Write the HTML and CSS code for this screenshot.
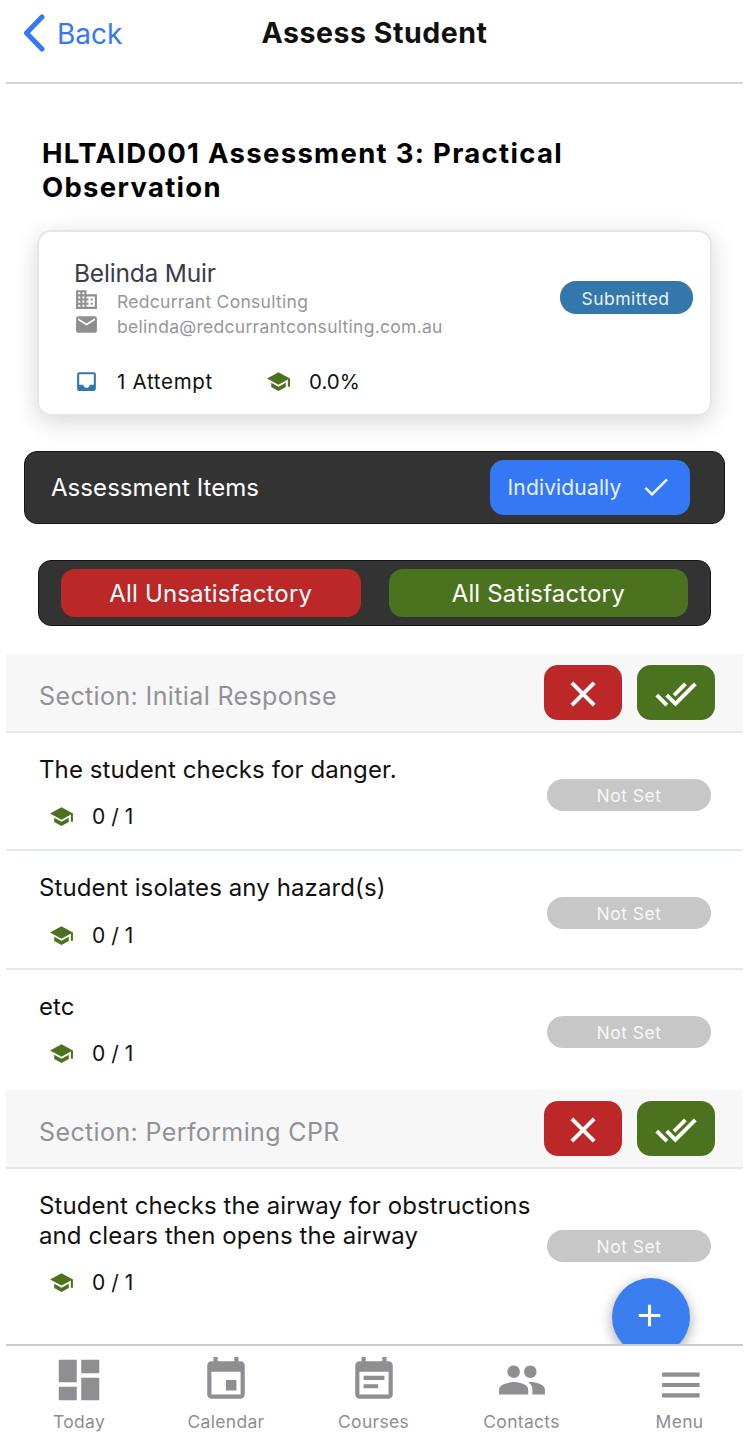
FILE: index.html
```html
<!DOCTYPE html>
<html lang="en">
<head>
  <meta charset="UTF-8" />
  <title>Assess Student</title>
  <link rel="stylesheet" href="styles.css">
</head>
<body>

  <!-- Icon set -->
  <svg class="sprite" viewBox="0 0 24 24">
    <symbol id="school" viewBox="0 0 24 24"><path d="M5 13.18v4L12 21l7-3.82v-4L12 17l-7-3.82zM12 3L1 9l11 6 9-4.91V17h2V9L12 3z"/></symbol>
    <symbol id="close" viewBox="0 0 24 24"><path d="M19 6.41L17.59 5 12 10.59 6.41 5 5 6.41 10.59 12 5 17.59 6.41 19 12 13.41 17.59 19 19 17.59 13.41 12z"/></symbol>
    <symbol id="done-all" viewBox="0 0 24 24"><path d="M18 7l-1.41-1.41-6.34 6.34 1.41 1.41L18 7zm4.24-1.41L11.66 16.17 7.48 12l-1.41 1.41L11.66 19l12-12-1.42-1.41zM.41 13.41L6 19l1.41-1.41L1.83 12 .41 13.41z"/></symbol>
  </svg>

  <header class="header">
    <a class="back" href="#">
      <svg class="chevron" viewBox="0 0 22 38"><path d="M19 3L3.5 19 19 35"/></svg>
      <span>Back</span>
    </a>
    <h1>Assess Student</h1>
  </header>

  <main class="content">
    <h2>HLTAID001 Assessment 3: Practical Observation</h2>

    <div class="card">
      <div class="student">
        <div class="name">Belinda Muir</div>
        <div class="detail">
          <svg class="icon" viewBox="0 0 24 24"><path d="M12 7V3H2v18h20V7H12zM6 19H4v-2h2v2zm0-4H4v-2h2v2zm0-4H4V9h2v2zm0-4H4V5h2v2zm4 12H8v-2h2v2zm0-4H8v-2h2v2zm0-4H8V9h2v2zm0-4H8V5h2v2zm10 12h-8v-2h2v-2h-2v-2h2v-2h-2V9h8v10zm-2-8h-2v2h2v-2zm0 4h-2v2h2v-2z"/></svg>
          <span>Redcurrant Consulting</span>
        </div>
        <div class="detail">
          <svg class="icon" viewBox="0 0 24 24"><path d="M20 4H4c-1.1 0-1.99.9-1.99 2L2 18c0 1.1.9 2 2 2h16c1.1 0 2-.9 2-2V6c0-1.1-.9-2-2-2zm0 4l-8 5-8-5V6l8 5 8-5v2z"/></svg>
          <span>belinda@redcurrantconsulting.com.au</span>
        </div>
        <div class="stats">
          <div class="stat attempts">
            <svg class="icon blue" viewBox="0 0 24 24"><path d="M19 3H4.99c-1.11 0-1.98.89-1.98 2L3 19c0 1.1.88 2 1.99 2H19c1.1 0 2-.9 2-2V5c0-1.11-.9-2-2-2zm0 12h-4c0 1.66-1.35 3-3 3s-3-1.34-3-3H4.99V5H19v10z"/></svg>
            <span>1 Attempt</span>
          </div>
          <div class="stat">
            <svg class="icon green"><use href="#school"/></svg>
            <span>0.0%</span>
          </div>
        </div>
      </div>
      <span class="badge submitted">Submitted</span>
    </div>

    <div class="bar items-bar">
      <span class="bar-title">Assessment Items</span>
      <button class="btn individually">
        <span>Individually</span>
        <svg class="check" viewBox="0 0 24 24"><path d="M9 16.2L4.8 12l-1.4 1.4L9 19 21 7l-1.4-1.4L9 16.2z"/></svg>
      </button>
    </div>

    <div class="bar all-bar">
      <button class="btn red">All Unsatisfactory</button>
      <button class="btn green-bg">All Satisfactory</button>
    </div>

    <section>
      <div class="section-head">
        <h3>Section: Initial Response</h3>
        <button class="btn square red"><svg><use href="#close"/></svg></button>
        <button class="btn square green-bg"><svg><use href="#done-all"/></svg></button>
      </div>
      <div class="item">
        <div class="item-text">
          <p>The student checks for danger.</p>
          <div class="score"><svg class="icon green"><use href="#school"/></svg><span>0 / 1</span></div>
        </div>
        <span class="badge not-set">Not Set</span>
      </div>
      <div class="item">
        <div class="item-text">
          <p>Student isolates any hazard(s)</p>
          <div class="score"><svg class="icon green"><use href="#school"/></svg><span>0 / 1</span></div>
        </div>
        <span class="badge not-set">Not Set</span>
      </div>
      <div class="item">
        <div class="item-text">
          <p>etc</p>
          <div class="score"><svg class="icon green"><use href="#school"/></svg><span>0 / 1</span></div>
        </div>
        <span class="badge not-set">Not Set</span>
      </div>
    </section>

    <section>
      <div class="section-head">
        <h3>Section: Performing CPR</h3>
        <button class="btn square red"><svg><use href="#close"/></svg></button>
        <button class="btn square green-bg"><svg><use href="#done-all"/></svg></button>
      </div>
      <div class="item">
        <div class="item-text">
          <p>Student checks the airway for obstructions<br>and clears then opens the airway</p>
          <div class="score"><svg class="icon green"><use href="#school"/></svg><span>0 / 1</span></div>
        </div>
        <span class="badge not-set">Not Set</span>
      </div>
    </section>

    <button class="fab"><svg viewBox="0 0 24 24"><path d="M19 13h-6v6h-2v-6H5v-2h6V5h2v6h6v2z"/></svg></button>
  </main>

  <nav class="tabs">
    <a href="#">
      <svg class="big" viewBox="0 0 24 24"><path d="M3 13h8V3H3v10zm0 8h8v-6H3v6zm10 0h8V11h-8v10zm0-18v6h8V3h-8z"/></svg>
      <span>Today</span>
    </a>
    <a href="#">
      <svg viewBox="0 0 24 24"><path d="M17 12h-5v5h5v-5zM16 1v2H8V1H6v2H5c-1.11 0-1.99.9-1.99 2L3 19c0 1.1.89 2 2 2h14c1.1 0 2-.9 2-2V5c0-1.1-.9-2-2-2h-1V1h-2zm3 18H5V8h14v11z"/></svg>
      <span>Calendar</span>
    </a>
    <a href="#">
      <svg viewBox="0 0 24 24"><path d="M17 10H7v2h10v-2zm2-7h-1V1h-2v2H8V1H6v2H5c-1.11 0-1.99.9-1.99 2L3 19c0 1.1.89 2 2 2h14c1.1 0 2-.9 2-2V5c0-1.1-.9-2-2-2zm0 16H5V8h14v11zm-5-5H7v2h7v-2z"/></svg>
      <span>Courses</span>
    </a>
    <a href="#">
      <svg viewBox="0 0 24 24"><path d="M16 11c1.66 0 2.99-1.34 2.99-3S17.66 5 16 5c-1.66 0-3 1.34-3 3s1.34 3 3 3zm-8 0c1.66 0 2.99-1.34 2.99-3S9.66 5 8 5C6.34 5 5 6.34 5 8s1.34 3 3 3zm0 2c-2.33 0-7 1.17-7 3.5V19h14v-2.5c0-2.33-4.67-3.5-7-3.5zm8 0c-.29 0-.62.02-.97.05 1.16.84 1.97 1.97 1.97 3.45V19h6v-2.5c0-2.33-4.67-3.5-7-3.5z"/></svg>
      <span>Contacts</span>
    </a>
    <a class="menu" href="#">
      <svg viewBox="0 0 24 24"><path d="M3 20.4h18v-2H3v2zm0-5h18v-2H3v2zm0-7v2h18v-2H3z" transform="translate(.4)"/></svg>
      <span>Menu</span>
    </a>
  </nav>

</body>
</html>
```
FILE: styles.css
```css
* {
  box-sizing: border-box;
}

body {
  margin: 0;
  padding: 0 3px 0 6px;
  height: 1436px;
  overflow: hidden;
  background: #fff;
  color: #111;
  font-family: Inter, "Liberation Sans", sans-serif;
}

h1, h2, h3, p {
  margin: 0;
}

a {
  text-decoration: none;
}

svg {
  display: block;
  flex: none;
  fill: currentColor;
}

.sprite {
  display: none;
}

/* Header */
.header {
  display: grid;
  grid-template-columns: 1fr auto 1fr;
  height: 84px;
  padding: 0 0 16px 17px;
  border-bottom: 2px solid #d6d6d6;
  align-items: center;
}

.back {
  display: flex;
  align-items: center;
  gap: 12px;
  color: #3478f6;
  font-size: 28px;
}

.back span {
  padding-top: 2px;
}

.chevron {
  width: 22px;
  height: 38px;
  fill: none;
  stroke: #3478f6;
  stroke-width: 5;
  stroke-linecap: round;
  stroke-linejoin: round;
}

.header h1 {
  font-size: 28.5px;
  font-weight: 650;
  letter-spacing: 0.55px;
  padding: 0 17px 2px 0;
}

/* Content */
.content {
  position: relative;
  height: 1260px;
  overflow: hidden;
}

h2 {
  margin: 52px 36px 26px;
  font-size: 27.5px;
  line-height: 34px;
  font-weight: 650;
  letter-spacing: 1.3px;
  color: #000;
}

.card {
  display: flex;
  height: 186px;
  margin: 0 31px;
  padding: 27px 17px 0 35px;
  border: 2px solid #e2e7ed;
  border-radius: 14px;
  box-shadow: 0 6px 24px rgba(0,0,0,0.16);
}

.student {
  flex: 1;
}

.name {
  font-size: 24.5px;
  line-height: 28px;
  letter-spacing: -0.2px;
  color: #3a3d48;
}

.detail {
  display: flex;
  align-items: center;
  gap: 18px;
  height: 25px;
  font-size: 17.5px;
  letter-spacing: 0.28px;
  color: #96969a;
}

.detail span {
  padding-top: 3px;
}

.icon {
  width: 25px;
  height: 25px;
  color: #8e8e93;
}

.icon.blue {
  color: #3478ab;
}

.icon.green {
  color: #4b731f;
}

.stats {
  display: flex;
  margin-top: 30px;
}

.stat {
  display: flex;
  align-items: center;
  gap: 18px;
  height: 28px;
  font-size: 20.5px;
}

.attempts {
  width: 192px;
  letter-spacing: 0.7px;
}

.badge {
  height: 32px;
  border-radius: 16px;
  color: #fff;
  font-size: 17.5px;
  line-height: 34px;
  letter-spacing: 0.5px;
  text-align: center;
}

.submitted {
  width: 133px;
  height: 33px;
  margin-top: 22px;
  padding-right: 2px;
  line-height: 35px;
  background: #3478ab;
  color: #e9f1f7;
}

/* Dark bars */
.bar {
  display: flex;
  align-items: center;
  background: #333;
  border: 1px solid #151515;
  border-radius: 13px;
  color: #fff;
}

.items-bar {
  justify-content: space-between;
  height: 73px;
  margin: 35px 18px 0;
  padding: 0 34px 0 26px;
}

.bar-title {
  font-size: 24px;
  letter-spacing: 0.06px;
}

.btn {
  display: flex;
  align-items: center;
  justify-content: center;
  border: none;
  border-radius: 14px;
  padding: 0;
  color: #fff;
  font-family: inherit;
  font-size: 24px;
  letter-spacing: 0.15px;
}

.individually {
  gap: 19px;
  width: 200px;
  height: 55px;
  background: #3478f6;
  color: #e8f0ff;
  font-size: 21px;
}

.individually span {
  padding-bottom: 1px;
}

.check {
  width: 32px;
  height: 32px;
  margin-bottom: 1px;
}

.all-bar {
  gap: 28px;
  height: 66px;
  margin: 36px 32px 28px;
  padding: 0 22px;
}

.all-bar .btn {
  flex: 1;
  height: 48px;
}

.red {
  background: #bc2827;
}

.green-bg {
  background: #4b731f;
}

/* Sections */
.section-head {
  display: flex;
  align-items: center;
  gap: 14.5px;
  height: 78.5px;
  padding: 0 28.5px 0 33px;
  background: #f7f7f7;
  border-bottom: 2px solid #e4e9ee;
}

.section-head h3 {
  flex: 1;
  padding-top: 7px;
  font-size: 25px;
  font-weight: 400;
  letter-spacing: 0.38px;
  color: #929296;
}

.square {
  width: 78px;
  height: 55px;
}

.square svg {
  width: 42px;
  height: 42px;
  margin-top: 3px;
  stroke: currentColor;
  stroke-width: 0.3;
}

.item {
  display: flex;
  align-items: center;
  justify-content: space-between;
  height: 118.5px;
  padding: 22px 32px 18.5px 33px;
  border-bottom: 2px solid #e4e9ee;
}

.item:last-child {
  border-bottom: none;
  height: auto;
  padding-bottom: 22.5px;
}

.item p {
  font-size: 24px;
  line-height: 30px;
  letter-spacing: 0.1px;
  white-space: nowrap;
}

.score {
  display: flex;
  align-items: center;
  gap: 18px;
  height: 28px;
  margin: 18px 0 0 10px;
  font-size: 21px;
}

.not-set {
  width: 164px;
  margin-top: 4.5px;
  background: #c7c7c7;
  color: #f7f7f7;
}

.fab {
  position: absolute;
  top: 1194px;
  right: 53.5px;
  width: 78px;
  height: 78px;
  display: flex;
  align-items: center;
  justify-content: center;
  padding: 0 3px 3px 0;
  border: none;
  border-radius: 50%;
  background: #3b7ef0;
  color: #fff;
  box-shadow: 0 4px 14px rgba(0,0,0,0.35);
}

.fab svg {
  width: 37px;
  height: 37px;
}

/* Tab bar */
.tabs {
  display: grid;
  grid-template-columns: 146px 148px 147px 149px 1fr;
  height: 92px;
  border-top: 2px solid #cbcbcb;
}

.tabs a {
  display: flex;
  flex-direction: column;
  align-items: center;
  color: #8e8e93;
  font-size: 17.5px;
  letter-spacing: 0.3px;
}

.tabs svg {
  width: 50px;
  height: 50px;
  margin: 9px 0 6px;
}

.tabs .big {
  width: 54px;
  height: 54px;
  margin: 7px 0 4px;
}

.tabs .menu {
  padding-left: 20px;
}
```
